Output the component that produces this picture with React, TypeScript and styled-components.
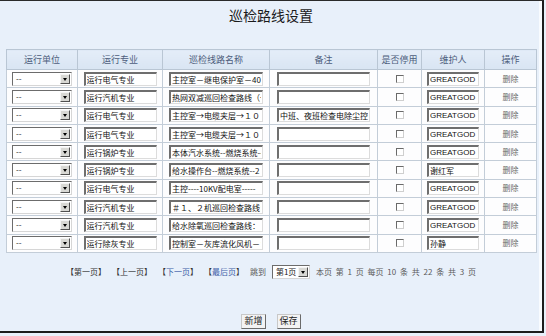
import styled, { createGlobalStyle } from "styled-components";

const GlobalStyle = createGlobalStyle`
  html, body {
    margin: 0;
    padding: 0;
    background: #e8f0fa;
  }
  body {
    width: 546px;
    height: 336px;
    overflow: hidden;
    font-family: "Noto Sans CJK SC", "Liberation Sans", sans-serif;
  }
`;

type Row = { major: string; route: string; note: string; owner: string };

const rows: Row[] = [
  { major: "运行电气专业", route: "主控室－继电保护室－400V配电室", note: "", owner: "GREATGOD" },
  { major: "运行汽机专业", route: "热网双减巡回检查路线（一）", note: "", owner: "GREATGOD" },
  { major: "运行电气专业", route: "主控室→电缆夹层→１０ＫＶ", note: "中班、夜班检查电除尘控制室", owner: "GREATGOD" },
  { major: "运行电气专业", route: "主控室→电缆夹层→１０", note: "", owner: "GREATGOD" },
  { major: "运行锅炉专业", route: "本体汽水系统--燃烧系统--", note: "", owner: "GREATGOD" },
  { major: "运行锅炉专业", route: "给水操作台--燃烧系统--2", note: "", owner: "谢红军" },
  { major: "运行电气专业", route: "主控----10KV配电室-----", note: "", owner: "GREATGOD" },
  { major: "运行汽机专业", route: "＃１、２机巡回检查路线：", note: "", owner: "GREATGOD" },
  { major: "运行汽机专业", route: "给水除氧巡回检查路线：", note: "", owner: "GREATGOD" },
  { major: "运行除灰专业", route: "控制室－灰库流化风机－：", note: "", owner: "孙静" },
];

const columns = [
  { title: "运行单位", width: 71 },
  { title: "运行专业", width: 85 },
  { title: "巡检线路名称", width: 107 },
  { title: "备注", width: 108 },
  { title: "是否停用", width: 44 },
  { title: "维护人", width: 63 },
  { title: "操作", width: 52 },
];

export default function App() {
  return (
    <>
      <GlobalStyle />
      <Frame>
        <Title>巡检路线设置</Title>
        <Grid>
          <colgroup>
            {columns.map((c) => (
              <col key={c.title} style={{ width: c.width }} />
            ))}
          </colgroup>
          <thead>
            <tr>
              {columns.map((c) => (
                <HeadCell key={c.title}>{c.title}</HeadCell>
              ))}
            </tr>
          </thead>
          <tbody>
            {rows.map((r, i) => (
              <BodyRow key={i}>
                <Cell>
                  <SelectBox $w={60}>
                    <span>--</span>
                    <Arrow />
                  </SelectBox>
                </Cell>
                <Cell>
                  <Field readOnly value={r.major} $w={73} />
                </Cell>
                <Cell>
                  <Field readOnly value={r.route} $w={94} />
                </Cell>
                <Cell>
                  <Field readOnly value={r.note} $w={93} />
                </Cell>
                <Cell>
                  <Check />
                </Cell>
                <Cell>
                  <Field readOnly value={r.owner} $w={52} $latin />
                </Cell>
                <Cell>
                  <Remove>删除</Remove>
                </Cell>
              </BodyRow>
            ))}
          </tbody>
        </Grid>

        <Pager>
          <PageLink>【第一页】</PageLink>
          <PageLink>【上一页】</PageLink>
          <PageLink $active>
            【<em>下一页</em>】
          </PageLink>
          <PageLink $active>
            【<em>最后页</em>】
          </PageLink>
          <Muted>跳到</Muted>
          <SelectBox $w={38}>
            <span>第1页</span>
            <Arrow />
          </SelectBox>
          <Muted>本页 第 1 页 每页 10 条 共 22 条 共 3 页</Muted>
        </Pager>

        <Actions>
          <Button>新增</Button>
          <Button>保存</Button>
        </Actions>
      </Frame>
    </>
  );
}

const Frame = styled.div`
  box-sizing: border-box;
  width: 544px;
  height: 333px;
  border-top: 1px solid #2a2a2a;
  border-right: 2px solid #1c1c1c;
  border-bottom: 2px solid #1c1c1c;
  box-shadow: inset -3px 0 0 #f8fbfe;
  display: flex;
  flex-direction: column;
`;

const Title = styled.div`
  margin-top: 5px;
  height: 18px;
  line-height: 18px;
  text-align: center;
  font-size: 14px;
  color: #1a1a1a;
`;

const Grid = styled.table`
  margin: 25px 0 0 6px;
  width: 530px;
  table-layout: fixed;
  border-collapse: collapse;
  background: #fdfdfe;
`;

const HeadCell = styled.th`
  height: 19px;
  padding: 0;
  border: 1px solid #b9c6d4;
  background: linear-gradient(#e4edf8, #d9e5f3);
  font-size: 9px;
  font-weight: normal;
  color: #4d5d7c;
  text-align: center;
`;

const BodyRow = styled.tr`
  height: 18.3px;
`;

const Cell = styled.td`
  padding: 0;
  border: 1px solid #c3cdd8;
  text-align: center;
  vertical-align: middle;
  line-height: 0;
`;

const SelectBox = styled.div<{ $w: number }>`
  box-sizing: border-box;
  display: inline-flex;
  align-items: center;
  justify-content: space-between;
  width: ${(p) => p.$w}px;
  height: 14px;
  padding: 0 1px 0 3px;
  background: #fff;
  border-top: 1px solid #6c6c6c;
  border-left: 1px solid #6c6c6c;
  border-right: 1px solid #d6d6d6;
  border-bottom: 1px solid #d6d6d6;
  font-size: 8px;
  line-height: 12px;
  color: #222;
  white-space: nowrap;
  vertical-align: middle;
`;

const Arrow = styled.span`
  position: relative;
  flex: none;
  box-sizing: border-box;
  width: 10px;
  height: 10px;
  background: #d8d8d4;
  border-top: 1px solid #f4f4f4;
  border-left: 1px solid #f4f4f4;
  border-right: 1px solid #505050;
  border-bottom: 1px solid #505050;

  &::after {
    content: "";
    position: absolute;
    left: 2px;
    top: 3px;
    border-left: 2px solid transparent;
    border-right: 2px solid transparent;
    border-top: 3px solid #000;
  }
`;

const Field = styled.input<{ $w: number; $latin?: boolean }>`
  box-sizing: border-box;
  width: ${(p) => p.$w}px;
  height: 14px;
  margin: 0;
  padding: 0 1px;
  background: #fff;
  border-top: 2px solid #6e6e6e;
  border-left: 2px solid #6e6e6e;
  border-right: 1px solid #dcdcdc;
  border-bottom: 1px solid #dcdcdc;
  font-family: ${(p) =>
    p.$latin ? `"Liberation Sans", "Noto Sans CJK SC", sans-serif` : `"Noto Sans CJK SC", sans-serif`};
  font-size: 8px;
  color: #111;
  outline: none;
  vertical-align: middle;
`;

const Check = styled.span`
  display: inline-block;
  box-sizing: border-box;
  width: 8px;
  height: 8px;
  background: #fff;
  border-top: 1px solid #6a6a6a;
  border-left: 1px solid #6a6a6a;
  border-right: 1px solid #cfcfcf;
  border-bottom: 1px solid #cfcfcf;
  vertical-align: middle;
`;

const Remove = styled.span`
  font-size: 8px;
  line-height: 12px;
  color: #6a6a6a;
`;

const Pager = styled.div`
  margin-top: 10px;
  height: 18px;
  display: flex;
  align-items: center;
  justify-content: center;
  gap: 6px;
  font-size: 8px;
  color: #444;
`;

const PageLink = styled.span<{ $active?: boolean }>`
  color: #333;

  em {
    font-style: normal;
    color: ${(p) => (p.$active ? "#3c5ea8" : "#333")};
  }
`;

const Muted = styled.span`
  color: #5a5a5a;
  word-spacing: 2px;
  white-space: nowrap;
`;

const Actions = styled.div`
  margin-top: 33px;
  display: flex;
  justify-content: center;
  gap: 11px;
`;

const Button = styled.button`
  box-sizing: border-box;
  height: 15px;
  padding: 0 2px;
  background: #f3f3f3;
  border-top: 1px solid #c8c8c8;
  border-left: 1px solid #c8c8c8;
  border-right: 1px solid #6a6a6a;
  border-bottom: 1px solid #6a6a6a;
  font-family: "Noto Sans CJK SC", sans-serif;
  font-size: 9px;
  line-height: 12px;
  color: #222;
`;
